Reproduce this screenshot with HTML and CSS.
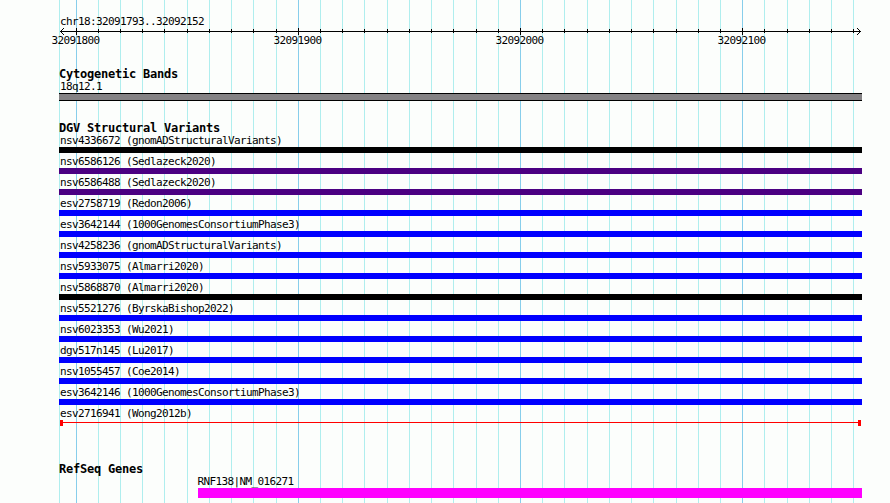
FILE: index.html
```
<!DOCTYPE html>
<html lang="en">
  <head>
    <meta charset="UTF-8" />
    <meta name="viewport" content="width=device-width, initial-scale=1.0" />
    <title>chr18:32091793..32092152</title>
    <link rel="stylesheet" href="styles.css">
  </head>
  <body>
    <main class="browser">
      <!-- vertical grid: one line every 10 bp, darker every 100 bp -->
      <svg class="grid" width="890" height="503" shape-rendering="crispEdges">
        <path id="minor" class="grid-minor" />
        <path id="major" class="grid-major" />
      </svg>

      <header class="ruler">
        <div class="label">chr18:32091793..32092152</div>
        <svg class="axis" width="803" height="8" shape-rendering="crispEdges">
          <path d="M1 3.5H802" />
          <path id="ticks" />
          <path id="bigTicks" />
          <path d="M2 2.5h1M3 1.5h1M4 .5h1M2 4.5h1M3 5.5h1M4 6.5h1" />
          <path d="M800 2.5h1M799 1.5h1M798 .5h1M800 4.5h1M799 5.5h1M798 6.5h1" />
        </svg>
        <div class="positions">
          <span>32091800</span>
          <span>32091900</span>
          <span>32092000</span>
          <span>32092100</span>
        </div>
      </header>

      <section class="track cytobands">
        <h2>Cytogenetic Bands</h2>
        <div class="label">18q12.1</div>
        <div class="band"></div>
      </section>

      <section class="track variants">
        <h2>DGV Structural Variants</h2>
        <div class="feature black"><div class="label">nsv4336672 (gnomADStructuralVariants)</div><div class="bar"></div></div>
        <div class="feature indigo"><div class="label">nsv6586126 (Sedlazeck2020)</div><div class="bar"></div></div>
        <div class="feature indigo"><div class="label">nsv6586488 (Sedlazeck2020)</div><div class="bar"></div></div>
        <div class="feature blue"><div class="label">esv2758719 (Redon2006)</div><div class="bar"></div></div>
        <div class="feature blue"><div class="label">esv3642144 (1000GenomesConsortiumPhase3)</div><div class="bar"></div></div>
        <div class="feature blue"><div class="label">nsv4258236 (gnomADStructuralVariants)</div><div class="bar"></div></div>
        <div class="feature blue"><div class="label">nsv5933075 (Almarri2020)</div><div class="bar"></div></div>
        <div class="feature black"><div class="label">nsv5868870 (Almarri2020)</div><div class="bar"></div></div>
        <div class="feature blue"><div class="label">nsv5521276 (ByrskaBishop2022)</div><div class="bar"></div></div>
        <div class="feature blue"><div class="label">nsv6023353 (Wu2021)</div><div class="bar"></div></div>
        <div class="feature blue"><div class="label">dgv517n145 (Lu2017)</div><div class="bar"></div></div>
        <div class="feature blue"><div class="label">nsv1055457 (Coe2014)</div><div class="bar"></div></div>
        <div class="feature blue"><div class="label">esv3642146 (1000GenomesConsortiumPhase3)</div><div class="bar"></div></div>
        <div class="feature"><div class="label">esv2716941 (Wong2012b)</div><div class="range"></div></div>
      </section>

      <section class="track genes">
        <h2>RefSeq Genes</h2>
        <div class="gene">
          <div class="label">RNF138|NM_016271</div>
          <div class="gene-bar"></div>
        </div>
      </section>
    </main>

    <script>
      const left = 59
      const minor = [59]
      const major = []

      for (let i = 0; i <= 35; i++) {
        const x = Math.floor(76 + i * 22.225)
        if (i % 10 === 0) {
          major.push(x)
        } else {
          minor.push(x)
        }
      }

      function lines(xs, y, height) {
        return xs.map((x) => `M${x + 0.5} ${y}v${height}`).join('')
      }

      function draw(id, d) {
        document.getElementById(id).setAttribute('d', d)
      }

      draw('minor', lines(minor, 0, 503))
      draw('major', lines(major, 0, 503))
      draw('ticks', lines(minor.slice(1).map((x) => x - left), 1, 4))
      draw('bigTicks', lines(major.map((x) => x - left), 0, 7))
    </script>
  </body>
</html>
```
FILE: styles.css
```
body {
  margin: 0;
  background-color: #fcfefc;
  color: #000;
  font-family: 'DejaVu Sans Mono', monospace;
  font-size: 11px;
  line-height: 13px;
}

.browser {
  position: relative;
  box-sizing: border-box;
  width: 890px;
  height: 503px;
  padding: 15px 28px 0 59px;
  overflow: hidden;
  isolation: isolate;
}

.grid {
  position: absolute;
  top: 0;
  left: 0;
  z-index: -1;
}

.grid-minor {
  stroke: #afeeee;
}

.grid-major {
  stroke: #87ceeb;
}

h2 {
  margin: 0;
  font-size: 12px;
  font-weight: bold;
  line-height: 12px;
  letter-spacing: -0.224px;
}

.label,
.positions {
  letter-spacing: -0.622px;
  white-space: pre;
}

.label {
  height: 13px;
  padding-left: 1px;
}

.axis {
  display: block;
  stroke: #000;
  fill: none;
}

.positions {
  display: flex;
  gap: 174px;
  margin: -2px 0 0 -7.5px;
}

.positions span {
  flex: none;
  width: 48px;
}

.cytobands {
  margin-top: 21px;
}

.cytobands h2,
.variants h2,
.genes h2 {
  height: 12px;
}

.band {
  box-sizing: border-box;
  height: 8px;
  border: solid #000;
  border-width: 1px 0;
  background-color: #848284;
}

.variants {
  margin-top: 21px;
}

.feature {
  height: 21px;
}

.bar {
  height: 6px;
}

.black .bar {
  background-color: #000;
}

.indigo .bar {
  background-color: #4b0082;
}

.blue .bar {
  background-color: #00f;
}

.range {
  height: 6px;
  margin: 0 1px;
  box-sizing: border-box;
  border: solid #f00;
  border-width: 0 3px;
  background: linear-gradient(#f00, #f00) 0 2px / 100% 1px no-repeat;
}

.genes {
  margin-top: 35px;
}

.gene {
  margin-left: 139px;
}

.gene .label {
  padding-left: 0;
  margin-left: -0.5px;
}

.gene-bar {
  height: 10px;
  background-color: #f0f;
}
```
